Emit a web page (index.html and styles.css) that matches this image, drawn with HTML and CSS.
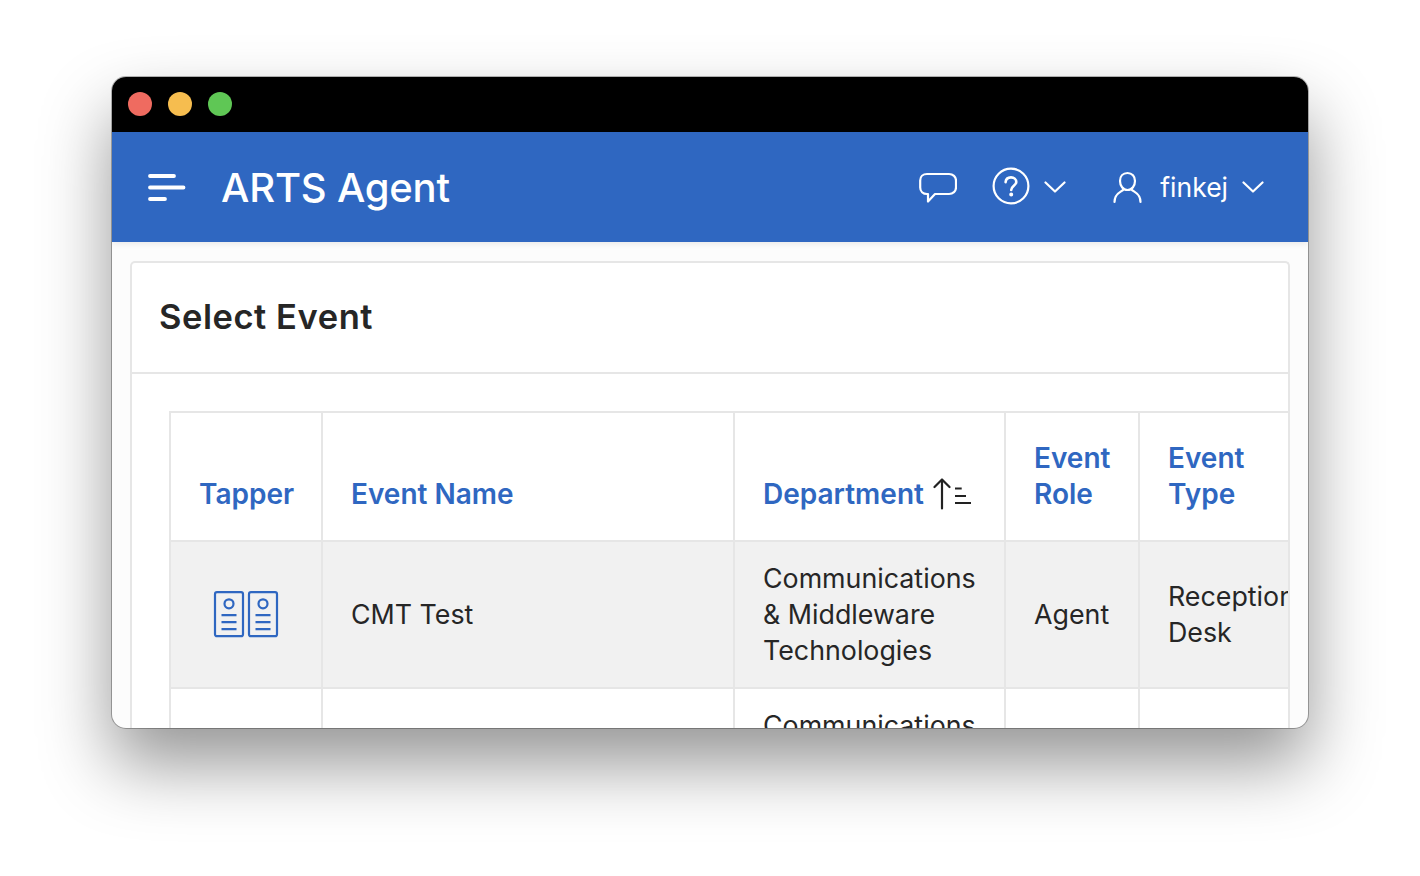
FILE: index.html
```html
<!DOCTYPE html>
<html lang="en">
<head>
<meta charset="utf-8">
<title>ARTS Agent</title>
<link rel="stylesheet" href="styles.css">
</head>
<body>
<div class="window">
  <div class="titlebar">
    <span class="dot dot-red"></span>
    <span class="dot dot-yellow"></span>
    <span class="dot dot-green"></span>
  </div>
  <header class="appbar">
    <svg class="menu-icon" width="38" height="30" viewBox="0 0 38 30" fill="none" stroke="#fff" stroke-width="3.8" stroke-linecap="round">
      <path d="M2 4H26M2 15.500H35.500M2 27H17"/>
    </svg>
    <h1 class="app-title">ARTS Agent</h1>
    <div class="nav">
      <svg class="chat-icon" width="38" height="32" viewBox="0 0 38 32" fill="none" stroke="#fff" stroke-width="2.200" stroke-linejoin="round">
        <path d="M8 3H30C34 3 37 5.800 37 9.500V16.500C37 20.200 34 23 30 23H16L9 30.500V23H8C4 23 1.200 20.200 1.200 16.500V9.500C1.200 5.800 4 3 8 3Z"/>
      </svg>
      <svg class="help-icon" width="38" height="38" viewBox="0 0 38 38" fill="none" stroke="#fff" stroke-width="2.200" stroke-linecap="round">
        <circle cx="19" cy="19" r="17.400"/>
        <path stroke-width="2.600" d="M13.600 15.200C13.800 12 16 10.400 19 10.400C22 10.400 24.300 12.200 24.300 14.900C24.300 18.600 19.200 19 19.200 23"/>
        <circle cx="19.200" cy="27.600" r="0.900" fill="#fff"/>
      </svg>
      <svg class="chevron chevron-help" width="22" height="12" viewBox="0 0 22 12" fill="none" stroke="#fff" stroke-width="2.200" stroke-linecap="round" stroke-linejoin="round">
        <path d="M1.500 1.500L11 10.500L20.500 1.500"/>
      </svg>
      <svg class="user-icon" width="30" height="34" viewBox="0 0 30 34" fill="none" stroke="#fff" stroke-width="2.200" stroke-linecap="round">
        <path d="M15.500 3C10.900 3 8 6.400 8 11C8 15.600 11 20 15.500 20C20 20 23 15.600 23 11C23 6.400 20.100 3 15.500 3Z"/>
        <path d="M11.500 19.500C9.500 22 2.500 23 2.500 32M19.500 19.500C21.500 22 28.500 23 28.500 32"/>
      </svg>
      <span class="username">finkej</span>
      <svg class="chevron" width="22" height="12" viewBox="0 0 22 12" fill="none" stroke="#fff" stroke-width="2.200" stroke-linecap="round" stroke-linejoin="round">
        <path d="M1.500 1.500L11 10.500L20.500 1.500"/>
      </svg>
    </div>
  </header>
  <main class="content">
    <section class="panel">
      <h2 class="panel-title">Select Event</h2>
      <div class="panel-body">
        <table class="grid">
          <colgroup>
            <col class="col-tapper"><col class="col-name"><col class="col-dept"><col class="col-role"><col class="col-type">
          </colgroup>
          <thead>
            <tr>
              <th>Tapper</th>
              <th>Event Name</th>
              <th>
                <span class="sort-head">Department
                  <svg class="sort-icon" width="39" height="32" viewBox="0 0 39 32" fill="none" stroke="#222" stroke-linecap="round" stroke-linejoin="round">
                    <path stroke-width="2.200" d="M9 30.500V1.500M1.500 9L9 1.500L16.500 9"/>
                    <path stroke-width="2" stroke-linecap="butt" d="M22 10.500H28.700M22 18H33M22 25H38"/>
                  </svg>
                </span>
              </th>
              <th>Event Role</th>
              <th>Event Type</th>
            </tr>
          </thead>
          <tbody>
            <tr class="row-shaded">
              <td class="cell-icon">
                <svg width="66" height="48" viewBox="0 0 66 48" fill="none" stroke="#2f67c1" stroke-width="2.200">
                  <rect x="2" y="1.200" width="28" height="44" rx="2"/>
                  <rect x="36" y="1.200" width="28" height="44" rx="2"/>
                  <circle cx="16" cy="12.800" r="4.500"/>
                  <circle cx="50" cy="12.800" r="4.500"/>
                  <path d="M8.500 24.200H23.500M8.500 31.200H23.500M8.500 38.200H23.500M42.500 24.200H57.500M42.500 31.200H57.500M42.500 38.200H57.500"/>
                </svg>
              </td>
              <td>CMT Test</td>
              <td>Communications &amp; Middleware Technologies</td>
              <td>Agent</td>
              <td>Reception Desk</td>
            </tr>
            <tr>
              <td class="cell-icon"></td>
              <td></td>
              <td>Communications &amp; Middleware Technologies</td>
              <td></td>
              <td></td>
            </tr>
          </tbody>
        </table>
      </div>
    </section>
  </main>
</div>
</body>
</html>
```
FILE: styles.css
```css
* { box-sizing: border-box; }

html, body { margin: 0; height: 100%; background: #fff; overflow: hidden; }

body {
  padding: 77px 112px 0;
  font-family: Inter, "Liberation Sans", sans-serif;
  color: #262626;
}

.window {
  height: 651px;
  border-radius: 14px;
  overflow: hidden;
  display: flex;
  flex-direction: column;
  background: #fcfcfc;
  box-shadow: 0 0 0 1px rgba(0, 0, 0, .28), 0 36px 70px rgba(0, 0, 0, .42);
}

.titlebar {
  flex: 0 0 55px;
  background: #000;
  display: flex;
  align-items: center;
  gap: 16px;
  padding: 0 0 1px 16px;
}

.dot { width: 24px; height: 24px; border-radius: 50%; }
.dot-red { background: #ef6b60; }
.dot-yellow { background: #f6bd4f; }
.dot-green { background: #5fc755; }

.appbar {
  flex: 0 0 110px;
  background: #2f67c1;
  display: flex;
  align-items: center;
  padding: 0 44px 0 36px;
  color: #fff;
  box-shadow: 0 2px 6px rgba(0, 0, 0, .08);
  position: relative;
}

.menu-icon { flex: none; }

.app-title {
  margin: 0 0 0 35px;
  font-size: 40px;
  font-weight: 500;
  letter-spacing: -.2px;
}

.nav { margin-left: auto; display: flex; align-items: center; }

.help-icon { margin: 0 0 2px 35px; }
.chevron-help { margin-left: 14px; }
.user-icon { margin-left: 46px; }
.username { margin: 0 14px 0 18px; font-size: 26.500px; }

.content { flex: 1; min-height: 0; padding: 19px 18px 0; }

.panel {
  height: calc(100% + 2px);
  overflow: hidden;
  background: #fff;
  border: 2px solid #e6e6e6;
  border-bottom: 0;
  border-radius: 5px 5px 0 0;
}

.panel-title {
  margin: 0;
  padding: 0 27px;
  height: 111px;
  line-height: 108px;
  font-size: 34.500px;
  letter-spacing: .55px;
  font-weight: 600;
  border-bottom: 2px solid #e6e6e6;
}

.panel-body { padding: 37px 0 0 37px; }

.grid {
  width: 1160px;
  table-layout: fixed;
  border-collapse: collapse;
  font-size: 26.800px;
  line-height: 36px;
}

.col-tapper { width: 152px; }
.col-name { width: 412px; }
.col-dept { width: 271px; }
.col-role { width: 134px; }
.col-type { width: 191px; }

.grid th, .grid td {
  border: 2px solid #e6e6e6;
  padding: 0 28px;
  text-align: left;
  overflow: hidden;
}

.grid th {
  height: 129px;
  padding-bottom: 28px;
  vertical-align: bottom;
  font-size: 28px;
  font-weight: 600;
  color: #2f67c1;
}

.grid td { height: 147px; padding-bottom: 1px; vertical-align: middle; }

.row-shaded td { background: #f1f1f1; }

.grid td.cell-icon { text-align: center; padding: 0; }
.cell-icon svg { display: block; margin: 0 auto; }

.sort-head { display: inline-flex; align-items: center; white-space: nowrap; }
.sort-icon { margin-left: 9px; flex: none; }
```
